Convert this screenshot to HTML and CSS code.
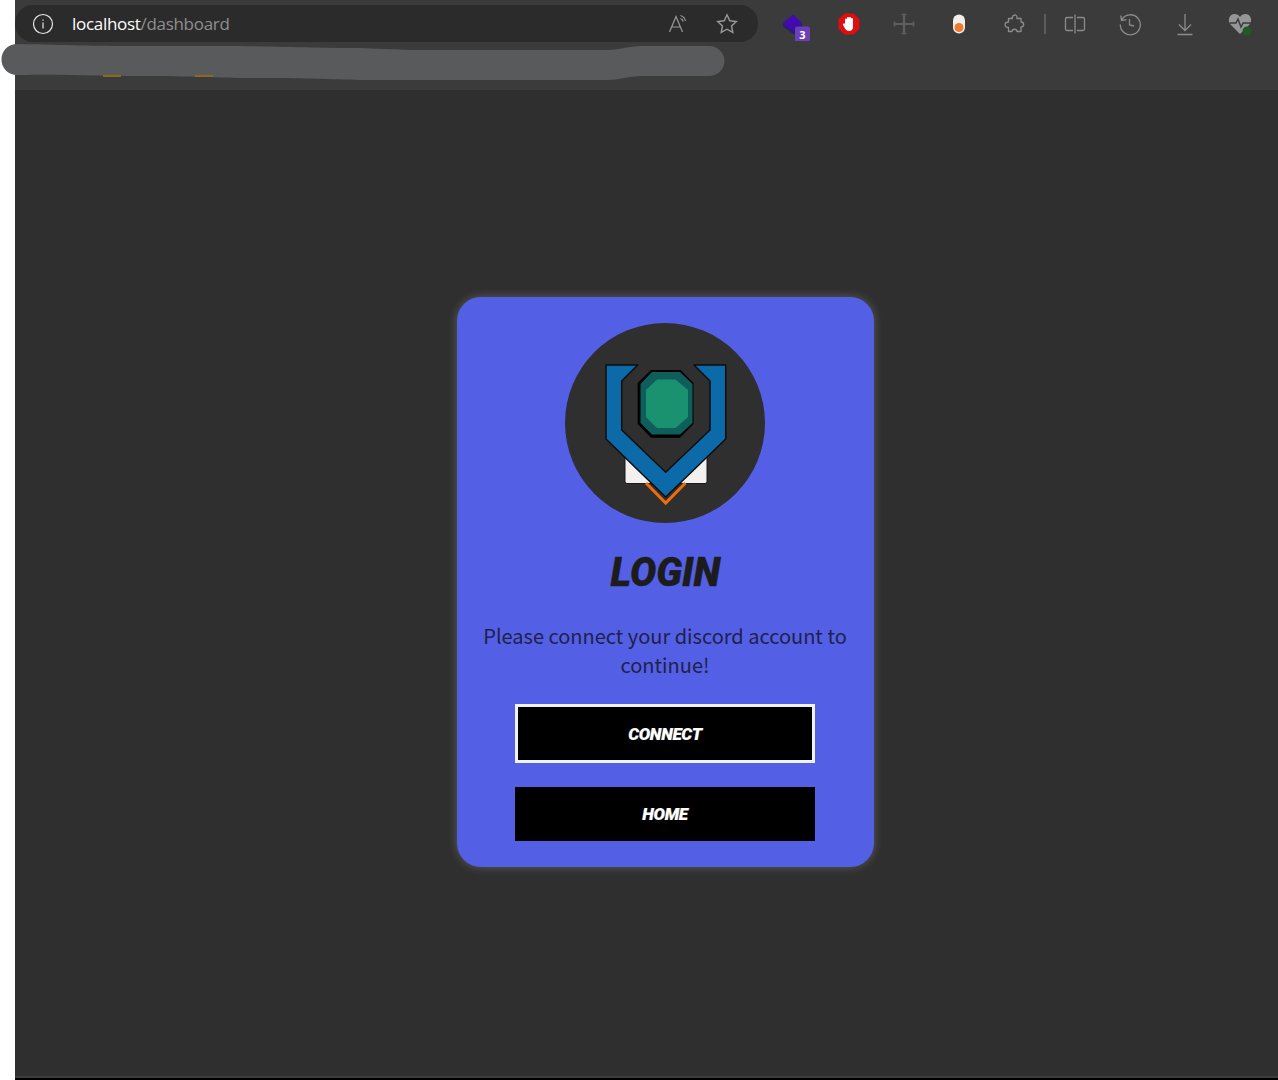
FILE: index.html
```html
<!DOCTYPE html>
<html lang="en">
<head>
<meta charset="utf-8">
<title>Login</title>
<link rel="stylesheet" href="styles.css">
</head>
<body>
<div class="window">
  <header class="toolbar">
    <div class="top-row">
      <div class="address">
        <svg class="info" width="22" height="22" viewBox="0 0 22 22"><circle cx="11" cy="11" r="9.500" fill="none" stroke="#e6e6e6" stroke-width="1.200"/><path d="M11 9.600v6M11 6.400v1.400" stroke="#e6e6e6" stroke-width="1.200"/></svg>
        <span class="url"><span class="host">localhost</span><span class="path">/dashboard</span></span>
        <div class="address-actions">
          <svg width="24" height="24" viewBox="0 0 24 24" fill="none" stroke="#9a9a9a" stroke-width="1.200"><path d="M3.500 20 10 4.500 16.500 20M6 15h8.500"/><path d="M14.500 3.500c2.500.8 4.500 2.800 5 5.500M14.500 6.500c1.300.5 2.300 1.500 2.700 3"/></svg>
          <svg width="24" height="24" viewBox="0 0 24 24" fill="none" stroke="#9a9a9a" stroke-width="1.400"><path d="M12 2.800l2.800 6 6.500.8-4.800 4.400 1.300 6.400-5.800-3.200-5.800 3.200 1.300-6.400L2.700 9.600l6.500-.8z"/></svg>
        </div>
      </div>
      <div class="extensions">
        <span class="ext">
          <svg width="32" height="34" viewBox="0 0 32 34"><path d="M5 16V19.500L16 27.500V23.500Z" fill="#2c1a78"/><path d="M16 23.500 24 16V19L16 27.500Z" fill="#2c1a78"/><path d="M15 7.500 5 16 16 23.500 24 15.500Z" fill="#4309b0"/><rect x="17" y="19.500" width="15" height="15.500" rx="2" fill="#6b3fb8"/><text x="24.500" y="31.500" class="badge-text">3</text></svg>
        </span>
        <span class="ext">
          <svg width="24" height="24" viewBox="0 0 24 24"><path d="M7.500 1.500h9l6 6v9l-6 6h-9l-6-6v-9z" fill="#e30d0d"/><path d="M8 11V7.500a1 1 0 0 1 2 0V6a1 1 0 0 1 2 0 1 1 0 0 1 2 0v1a1 1 0 0 1 2 0v8c0 2.500-1.500 4-4 4-2 0-3-1-4-2.500L6 13c-.6-1 .8-2 1.600-1z" fill="#fff"/></svg>
        </span>
        <span class="ext">
          <svg width="24" height="24" viewBox="0 0 24 24" fill="none" stroke="#5e5e5e"><path d="M12 2v20" stroke-width="2.400"/><path d="M2.500 12h19" stroke-width="2"/><path d="M9.500 2.500h5M9.500 21.500h5M2.500 9.500v5M21.500 9.500v5" stroke-width="1.600"/></svg>
        </span>
        <span class="ext">
          <svg width="24" height="24" viewBox="0 0 24 24"><rect x="6" y="2.500" width="12" height="19" rx="6" fill="#f2eeea"/><circle cx="12" cy="15.500" r="4.500" fill="#ee7b30"/></svg>
        </span>
        <span class="ext">
          <svg width="24" height="24" viewBox="0 0 24 24" fill="none" stroke="#8c8c8c" stroke-width="1.300" stroke-linejoin="round"><path d="M8 6.500H10.500C9.500 3 14.500 1.500 15 5V6.500H19V10C22.500 10 22.500 15 19 15V19.500H15C15 16.500 10 16.500 10 19.500H6.500V15.500C2 15.500 2 10 6.500 10V6.500Z"/></svg>
        </span>
        <span class="divider"></span>
        <span class="ext">
          <svg width="24" height="24" viewBox="0 0 24 24" fill="none" stroke="#8c8c8c" stroke-width="1.300"><path d="M10 5.500H4a1.500 1.500 0 0 0-1.500 1.500v10A1.500 1.500 0 0 0 4 18.500h6M14 5.500h6A1.500 1.500 0 0 1 21.500 7v10a1.500 1.500 0 0 1-1.500 1.500h-6M12 2.500v19"/></svg>
        </span>
        <span class="ext">
          <svg width="24" height="24" viewBox="0 0 24 24" fill="none" stroke="#8c8c8c" stroke-width="1.300"><path d="M3.500 8A10 10 0 1 1 2.300 12.500M2.800 3.500l.7 5 5-.8M11.500 7v6l4.500 1"/></svg>
        </span>
        <span class="ext">
          <svg width="24" height="24" viewBox="0 0 24 24" fill="none" stroke="#8c8c8c" stroke-width="1.300"><path d="M12 2v16M6 12.500l6 6 6-6M4.500 22.500h15"/></svg>
        </span>
        <span class="ext">
          <svg width="26" height="26" viewBox="0 0 26 26"><path d="M13 23 3.500 13.500C0 9.500 2.500 3 7.500 3c2.500 0 4.300 1 5.500 3 1.200-2 3-3 5.500-3 5 0 7.500 6.500 4 10.500z" fill="#969696"/><path d="M2.500 12H9l2-4 3 8 2.200-4H24" fill="none" stroke="#3b3b3b" stroke-width="1.500"/><circle cx="20" cy="20" r="4.500" fill="#1e5a2a"/></svg>
        </span>
      </div>
    </div>
    <svg class="scribble" width="730" height="42" viewBox="0 0 730 42"><path d="M18 1C70 2 90 3 140 3S220 3 240 3C290 4 330 5 350 5S400 7 420 7H607C620 7 628 3 642 3H708C730 3 730 33 708 33H642C628 33 620 37 607 37H370C340 37 320 35 250 35 220 35 190 33 140 33 100 33 70 31 18 32-4 32-4 1 18 1Z" fill="#595a5c"/></svg>
    <span class="bookmark-mark bookmark-one"></span>
    <span class="bookmark-mark bookmark-two"></span>
  </header>
  <main class="content">
    <section class="card">
      <svg class="logo" width="200" height="200" viewBox="0 0 200 200">
        <circle cx="100" cy="100" r="100" fill="#2f2f2f"/>
        <path d="M60 134V158.500Q60 160.500 62 160.500H88ZM142 134V158.500Q142 160.500 140 160.500H114Z" fill="#f5f0f0" stroke="#1a1a1a" stroke-width="1"/>
        <path d="M81 160 100.700 180 120.500 160" fill="none" stroke="#ef6c0a" stroke-width="3"/>
        <path d="M41 42H72.700L56.700 58V107L100.700 149.300 145 107V58L129 42H160.700V116L100.700 174 41 116Z" fill="#0d6aa8" stroke="#0d0d0d" stroke-width="1.500" stroke-linejoin="round"/>
        <path d="M86 47H115.500L128.500 60V101L115 114.700H86L72.700 101V60Z" fill="#000"/>
        <path d="M87 49H115L127.500 61V100L115 111.500H87L75.500 100V61Z" fill="#0e5f5c"/>
        <path d="M92 56.500H110.500L123 67V94L110.500 105H92L81 94V67Z" fill="#1a9270"/>
      </svg>
      <h1 class="title">LOGIN</h1>
      <p class="message">Please connect your discord account to continue!</p>
      <a class="btn btn-outlined">CONNECT</a>
      <a class="btn">HOME</a>
    </section>
  </main>
</div>
</body>
</html>
```
FILE: styles.css
```css
* { box-sizing: border-box; }
html, body { margin: 0; height: 100%; }
body { background: #fff; padding-left: 15px; height: 1080px; overflow: hidden; font-family: "Noto Sans", sans-serif; }
.window { height: 1080px; display: flex; flex-direction: column; background: #2f2f2f; border-bottom: 2px solid #000; }
.toolbar { height: 90px; flex: none; background: #3b3b3b; padding-top: 5px; position: relative; }
.top-row { display: flex; align-items: center; height: 37px; }
.address { width: 743px; height: 37px; flex: none; background: #2b2b2b; border-radius: 18px; display: flex; align-items: center; padding-left: 17px; padding-right: 19px; }
.info { flex: none; }
.url { margin-left: 18px; font: 17px/24px "Open Sans", sans-serif; letter-spacing: -0.3px; }
.host { color: #fff; }
.path { color: #8f8f8f; }
.address-actions { margin-left: auto; display: flex; gap: 25px; }
.extensions { display: flex; align-items: center; margin-left: 8px; }
.ext { width: 55px; display: flex; justify-content: center; align-items: center; flex: none; }
.divider { width: 2px; height: 20px; background: #5c5c5c; margin: 0 1px 0 3px; flex: none; }
.badge-text { font: bold 11px "Noto Sans", sans-serif; fill: #fff; text-anchor: middle; }
.scribble { position: absolute; left: -15px; top: 43px; }
.bookmark-mark { position: absolute; top: 75px; width: 18px; height: 2px; background: #8a6a1e; }
.bookmark-one { left: 88px; }
.bookmark-two { left: 180px; }
.content { flex: 1; display: flex; justify-content: center; align-items: center; padding-left: 38px; padding-bottom: 2px; border-bottom: 2px solid #3c3c3c; }
.card { width: 417px; height: 570px; background: #5360e6; border-radius: 24px; box-shadow: 0 0 10px rgba(255,255,255,.22); padding: 26px 1px 0 0; display: flex; flex-direction: column; align-items: center; }
.logo { flex: none; }
.title { margin: 26px 0 0; font: italic 900 41px/46px "Roboto", sans-serif; color: #1c1c1c; -webkit-text-stroke: .4px #1c1c1c; transform: scaleX(.955); }
.message { margin: 26px 0 0; width: 380px; text-align: center; font: 400 20px/29px "Noto Sans CJK SC", "Noto Sans", sans-serif; color: #20204a; }
.btn { width: 300px; height: 54px; background: #000; color: #fff; display: flex; align-items: center; justify-content: center; font: italic 900 17px/20px "Roboto", sans-serif; letter-spacing: -0.3px; -webkit-text-stroke: .2px #fff; margin-top: 24px; }
.btn-outlined { height: 59px; border: 3px solid #f2f2f2; margin-top: 25px; }
```
